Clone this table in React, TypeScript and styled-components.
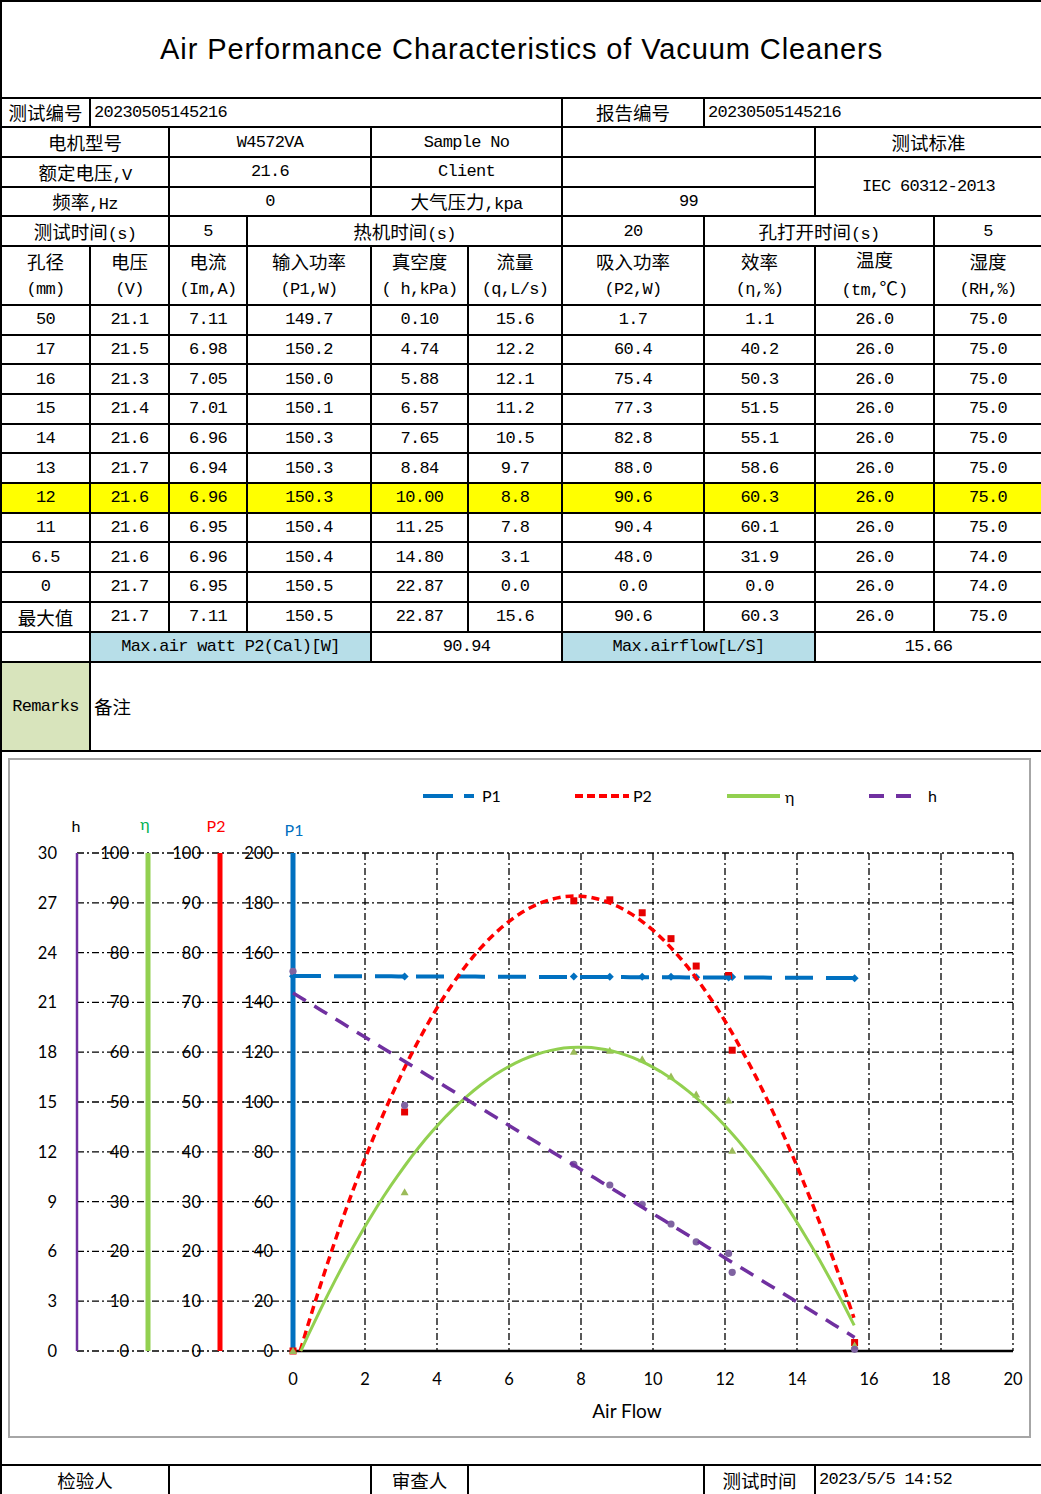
import React from "react";
import styled, { createGlobalStyle } from "styled-components";

const GlobalStyle = createGlobalStyle`
  html, body {
    margin: 0;
    padding: 0;
    background: #fff;
  }
`;

const Sheet = styled.table`
  width: 1041px;
  border-collapse: collapse;
  table-layout: fixed;
  font-family: "Liberation Mono", "Noto Sans CJK SC", monospace;
  font-size: 17px;
  letter-spacing: -0.7px;
  color: #000;
`;

const Row = styled.tr<{ $h: number }>`
  height: ${(p) => p.$h}px;
`;

const Cell = styled.td<{ $left?: boolean; $bg?: string }>`
  border: 2px solid #000;
  padding: 0 ${(p) => (p.$left ? "3px" : "0")};
  text-align: ${(p) => (p.$left ? "left" : "center")};
  vertical-align: middle;
  white-space: nowrap;
  overflow: hidden;
  background: ${(p) => p.$bg || "transparent"};
`;

const HeadCell = styled(Cell)`
  line-height: 25px;
  white-space: normal;
`;

const TitleCell = styled.td`
  border: 2px solid #000;
  text-align: center;
  vertical-align: middle;
  font-family: "Liberation Sans", Arial, sans-serif;
  font-size: 29px;
  letter-spacing: 0.9px;
`;

const ChartCell = styled.td`
  border: 2px solid #000;
  padding: 0;
  vertical-align: top;
`;

const ChartFrame = styled.div`
  margin: 6px 10px 0 6px;
  height: 676px;
  border: 2px solid #a6a6a6;
  background: #fff;

  svg {
    display: block;
    font-family: Lato, "Liberation Sans", sans-serif;
    letter-spacing: 0;
  }
`;

const Zh = styled.span`
  font-family: "Noto Sans CJK SC", sans-serif;
  font-size: 18.5px;
  letter-spacing: 0;
`;

const CJK = /([\u2100-\u214F\u3000-\u9FFF\uFF00-\uFFEF]+)/;

const Txt = ({ t }: { t: string }) => (
  <>
    {t.split(CJK).map((part, i) => (i % 2 ? <Zh key={i}>{part}</Zh> : part))}
  </>
);

const heads = [
  ["孔径", "(mm)"],
  ["电压", "(V)"],
  ["电流", "(Im,A)"],
  ["输入功率", "(P1,W)"],
  ["真空度", "( h,kPa)"],
  ["流量", "(q,L/s)"],
  ["吸入功率", "(P2,W)"],
  ["效率", "(η,%)"],
  ["温度", "(tm,℃)"],
  ["湿度", "(RH,%)"],
];

const rows = [
  ["50", "21.1", "7.11", "149.7", "0.10", "15.6", "1.7", "1.1", "26.0", "75.0"],
  ["17", "21.5", "6.98", "150.2", "4.74", "12.2", "60.4", "40.2", "26.0", "75.0"],
  ["16", "21.3", "7.05", "150.0", "5.88", "12.1", "75.4", "50.3", "26.0", "75.0"],
  ["15", "21.4", "7.01", "150.1", "6.57", "11.2", "77.3", "51.5", "26.0", "75.0"],
  ["14", "21.6", "6.96", "150.3", "7.65", "10.5", "82.8", "55.1", "26.0", "75.0"],
  ["13", "21.7", "6.94", "150.3", "8.84", "9.7", "88.0", "58.6", "26.0", "75.0"],
  ["12", "21.6", "6.96", "150.3", "10.00", "8.8", "90.6", "60.3", "26.0", "75.0"],
  ["11", "21.6", "6.95", "150.4", "11.25", "7.8", "90.4", "60.1", "26.0", "75.0"],
  ["6.5", "21.6", "6.96", "150.4", "14.80", "3.1", "48.0", "31.9", "26.0", "74.0"],
  ["0", "21.7", "6.95", "150.5", "22.87", "0.0", "0.0", "0.0", "26.0", "74.0"],
  ["最大值", "21.7", "7.11", "150.5", "22.87", "15.6", "90.6", "60.3", "26.0", "75.0"],
];

const cols = [89, 79, 78, 124, 97, 94, 142, 111, 119, 108];

// chart data (q, P1, P2, eta, h)
const pts = [
  [15.6, 149.7, 1.7, 1.1, 0.1],
  [12.2, 150.2, 60.4, 40.2, 4.74],
  [12.1, 150.0, 75.4, 50.3, 5.88],
  [11.2, 150.1, 77.3, 51.5, 6.57],
  [10.5, 150.3, 82.8, 55.1, 7.65],
  [9.7, 150.3, 88.0, 58.6, 8.84],
  [8.8, 150.3, 90.6, 60.3, 10.0],
  [7.8, 150.4, 90.4, 60.1, 11.25],
  [3.1, 150.4, 48.0, 31.9, 14.8],
  [0, 150.5, 0, 0, 22.87],
];

const BLUE = "#0070c0";
const RED = "#ff0000";
const GREEN = "#92d050";
const PURPLE = "#7030a0";

const X = (q: number) => 292 + q * 36;
const Y = (v: number, max: number) => 1351 - (v / max) * 498;

const trend = (f: (x: number) => number, x0: number, x1: number, max: number) => {
  const p: string[] = [];
  for (let i = 0; i <= 80; i++) {
    const x = x0 + ((x1 - x0) * i) / 80;
    p.push(`${X(x).toFixed(1)},${Y(f(x), max).toFixed(1)}`);
  }
  return "M" + p.join("L");
};

const fP2 = (x: number) => 0.01006 * x ** 3 - 1.7264 * x ** 2 + 25.204 * x - 4.972;
const fEta = (x: number) => 0.003337 * x ** 3 - 1.0687 * x ** 2 + 16.408 * x - 3.558;
const fH = (x: number) => 21.57 - 1.33 * x;
const fP1 = (x: number) => 150.6 - 0.05 * x;

const grid = "7 3 2 3";

const Chart = () => {
  const ticks = Array.from({ length: 11 }, (_, i) => i);
  return (
    <svg width={1018} height={676} viewBox="0 0 1018 676">
      <g transform="translate(-9,-760)">
        {/* legend */}
        <line x1={422} y1={796} x2={473} y2={796} stroke={BLUE} strokeWidth={4} strokeDasharray="30 11" />
        <text x={481} y={802} fontSize={16}>P1</text>
        <line x1={574} y1={796} x2={628} y2={796} stroke={RED} strokeWidth={4} strokeDasharray="8 4" />
        <text x={632} y={802} fontSize={16}>P2</text>
        <line x1={726} y1={796} x2={779} y2={796} stroke={GREEN} strokeWidth={4} />
        <text x={784} y={803} fontSize={16}>η</text>
        <line x1={868} y1={796} x2={911} y2={796} stroke={PURPLE} strokeWidth={4} strokeDasharray="15 12" />
        <text x={927} y={802} fontSize={16}>h</text>

        {/* axis titles */}
        <text x={75} y={832} fontSize={16} textAnchor="middle">h</text>
        <text x={144} y={830} fontSize={16} textAnchor="middle" fill="#00b050">η</text>
        <text x={215} y={832} fontSize={16} textAnchor="middle" fill={RED}>P2</text>
        <text x={293} y={836} fontSize={16} textAnchor="middle" fill={BLUE}>P1</text>

        {/* tick labels */}
        {ticks.map((i) => {
          const y = 1351 - i * 49.8 + 6;
          return (
            <g key={i} fontSize={16.5} textAnchor="end">
              <text x={56} y={y}>{i * 3}</text>
              <text x={128} y={y}>{i * 10}</text>
              <text x={200} y={y}>{i * 10}</text>
              <text x={272} y={y}>{i * 20}</text>
            </g>
          );
        })}

        {/* grid */}
        {ticks.slice(1).map((i) => (
          <line key={"h" + i} x1={76} x2={1012} y1={1351 - i * 49.8} y2={1351 - i * 49.8}
            stroke="#000" strokeWidth={1.3} strokeDasharray={grid} />
        ))}
        <line x1={76} x2={292} y1={1351} y2={1351} stroke="#000" strokeWidth={1.3} strokeDasharray={grid} />
        {ticks.slice(1).map((k) => (
          <line key={"v" + k} x1={292 + 72 * k} x2={292 + 72 * k} y1={853} y2={1351}
            stroke="#000" strokeWidth={1.3} strokeDasharray={grid} />
        ))}
        <line x1={292} x2={1012} y1={1351} y2={1351} stroke="#000" strokeWidth={2.5} />

        {/* value axes */}
        <line x1={76} x2={76} y1={853} y2={1351} stroke={PURPLE} strokeWidth={2.5} />
        <line x1={147} x2={147} y1={853} y2={1351} stroke={GREEN} strokeWidth={5} />
        <line x1={219} x2={219} y1={853} y2={1351} stroke={RED} strokeWidth={5} />
        <line x1={292} x2={292} y1={853} y2={1351} stroke={BLUE} strokeWidth={5} />

        {/* x labels */}
        {ticks.map((k) => (
          <text key={"x" + k} x={292 + 72 * k} y={1385} fontSize={16.5} textAnchor="middle">{k * 2}</text>
        ))}
        <text x={626} y={1418} fontSize={19} textAnchor="middle">Air Flow</text>

        {/* markers */}
        {pts.map(([q, p1, p2, eta, h], i) => (
          <g key={"m" + i}>
            <polygon
              points={`${X(q) - 4},${Y(p1, 200)} ${X(q)},${Y(p1, 200) - 4} ${X(q) + 4},${Y(p1, 200)} ${X(q)},${Y(p1, 200) + 4}`}
              fill={BLUE} />
            <rect x={X(q) - 3.5} y={Y(p2, 100) - 3.5} width={7} height={7} fill="#e60000" />
            <polygon
              points={`${X(q) - 4},${Y(eta, 100) + 3} ${X(q)},${Y(eta, 100) - 4} ${X(q) + 4},${Y(eta, 100) + 3}`}
              fill="#9bbb59" />
            <circle cx={X(q)} cy={Y(h, 30)} r={3.6} fill="#7f63a1" />
          </g>
        ))}

        {/* trend lines */}
        <path d={trend(fP1, 0, 15.6, 200)} fill="none" stroke={BLUE} strokeWidth={4} strokeDasharray="28 13" />
        <path d={trend(fP2, 0.2, 15.58, 100)} fill="none" stroke={RED} strokeWidth={3.5} strokeDasharray="8 5" />
        <path d={trend(fEta, 0.22, 15.59, 100)} fill="none" stroke={GREEN} strokeWidth={3} />
        <path d={trend(fH, 0, 15.6, 30)} fill="none" stroke={PURPLE} strokeWidth={3.5} strokeDasharray="15 10" />
      </g>
    </svg>
  );
};

export default function App() {
  return (
    <>
      <GlobalStyle />
      <Sheet>
        <colgroup>
          {cols.map((w, i) => (
            <col key={i} style={{ width: w }} />
          ))}
        </colgroup>
        <tbody>
          <Row $h={96.5}>
            <TitleCell colSpan={10}>Air Performance Characteristics of Vacuum Cleaners</TitleCell>
          </Row>
          <Row $h={29.7}>
            <Cell><Txt t="测试编号" /></Cell>
            <Cell colSpan={5} $left>20230505145216</Cell>
            <Cell><Txt t="报告编号" /></Cell>
            <Cell colSpan={3} $left>20230505145216</Cell>
          </Row>
          <Row $h={29.7}>
            <Cell colSpan={2}><Txt t="电机型号" /></Cell>
            <Cell colSpan={2}>W4572VA</Cell>
            <Cell colSpan={2}>Sample No</Cell>
            <Cell colSpan={2} />
            <Cell colSpan={2}><Txt t="测试标准" /></Cell>
          </Row>
          <Row $h={29.7}>
            <Cell colSpan={2}><Txt t="额定电压,V" /></Cell>
            <Cell colSpan={2}>21.6</Cell>
            <Cell colSpan={2}>Client</Cell>
            <Cell colSpan={2} />
            <Cell colSpan={2} rowSpan={2}>IEC 60312-2013</Cell>
          </Row>
          <Row $h={29.7}>
            <Cell colSpan={2}><Txt t="频率,Hz" /></Cell>
            <Cell colSpan={2}>0</Cell>
            <Cell colSpan={2}><Txt t="大气压力,kpa" /></Cell>
            <Cell colSpan={2}>99</Cell>
          </Row>
          <Row $h={29.7}>
            <Cell colSpan={2}><Txt t="测试时间(s)" /></Cell>
            <Cell>5</Cell>
            <Cell colSpan={3}><Txt t="热机时间(s)" /></Cell>
            <Cell>20</Cell>
            <Cell colSpan={2}><Txt t="孔打开时间(s)" /></Cell>
            <Cell>5</Cell>
          </Row>
          <Row $h={59}>
            {heads.map(([a, b], i) => (
              <HeadCell key={i}>
                <Txt t={a} />
                <br />
                <Txt t={b} />
              </HeadCell>
            ))}
          </Row>
          {rows.map((r, i) => (
            <Row key={i} $h={29.7}>
              {r.map((v, j) => (
                <Cell key={j} $bg={i === 6 ? "#ffff00" : undefined}>
                  <Txt t={v} />
                </Cell>
              ))}
            </Row>
          ))}
          <Row $h={30}>
            <Cell />
            <Cell colSpan={3} $bg="#b7dee8">Max.air watt P2(Cal)[W]</Cell>
            <Cell colSpan={2}>90.94</Cell>
            <Cell colSpan={2} $bg="#b7dee8">Max.airflow[L/S]</Cell>
            <Cell colSpan={2}>15.66</Cell>
          </Row>
          <Row $h={89}>
            <Cell $bg="#d8e4bc">Remarks</Cell>
            <Cell colSpan={9} $left><Txt t="备注" /></Cell>
          </Row>
          <Row $h={714}>
            <ChartCell colSpan={10}>
              <ChartFrame>
                <Chart />
              </ChartFrame>
            </ChartCell>
          </Row>
          <Row $h={30}>
            <Cell colSpan={2}><Txt t="检验人" /></Cell>
            <Cell colSpan={2} />
            <Cell><Txt t="审查人" /></Cell>
            <Cell colSpan={2} />
            <Cell><Txt t="测试时间" /></Cell>
            <Cell colSpan={2} $left>2023/5/5 14:52</Cell>
          </Row>
        </tbody>
      </Sheet>
    </>
  );
}
